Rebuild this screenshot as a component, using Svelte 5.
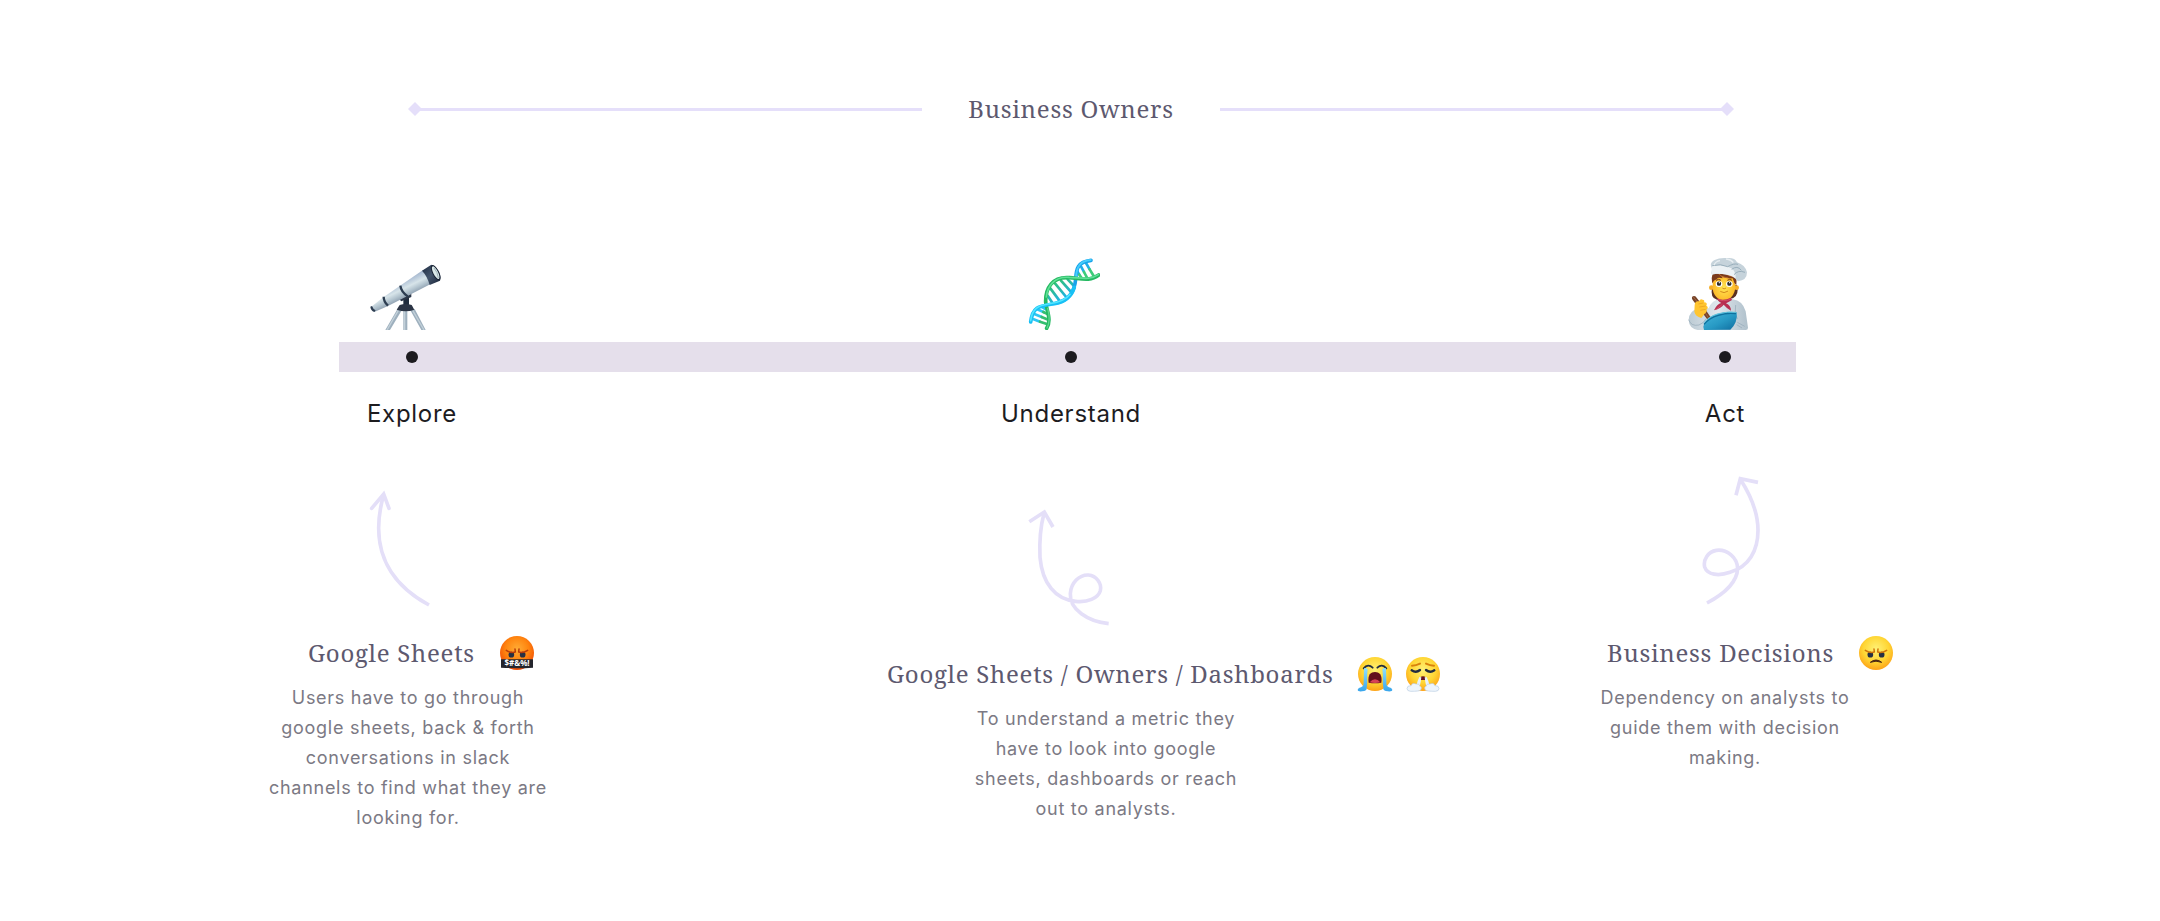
<script>
  const notes = [
    {
      id: 'explore',
      title: 'Google Sheets',
      faces: ['cursing'],
      text: 'Users have to go through google sheets, back & forth conversations in slack channels to find what they are looking for.',
      arrow: {
        width: 67,
        viewBox: '321 0 201 450',
        cap: 'round',
        head: 'M335 115 L371 72 L387 115',
        shaft: 'M507 405 C370 331 332 216 370 78'
      }
    },
    {
      id: 'understand',
      title: 'Google Sheets / Owners / Dashboards',
      faces: ['crying', 'steaming'],
      text: 'To understand a metric they have to look into google sheets, dashboards or reach out to analysts.',
      arrow: {
        width: 90,
        viewBox: '135 3 270 450',
        cap: 'butt',
        head: 'M148 95 L193 66 L219 111',
        shaft: 'M386 401 C324 395 268 358 271 311 C273 278 298 254 325 255 C350 257 366 281 361 302 C354 325 322 338 287 334 C226 329 187 280 180 202 C178 160 181 112 192 70'
      }
    },
    {
      id: 'act',
      title: 'Business Decisions',
      faces: ['angry'],
      text: 'Dependency on analysts to guide them with decision making.',
      arrow: {
        width: 63,
        viewBox: '180 30 189 450',
        cap: 'butt',
        head: 'M288 106 L301 56 L354 67',
        shaft: 'M201 429 C254 401 291 366 293 326 C292 291 260 267 229 271 C204 275 189 299 194 321 C202 345 236 349 270 337 C326 321 354 273 354 211 C354 158 332 106 302 59'
      }
    }
  ];
</script>

{#snippet face(kind)}
  <svg class="face" viewBox="0 0 108 108" aria-hidden="true">
    <defs>
      <radialGradient id="g-{kind}" cx="50%" cy="38%" r="62%">
        {#if kind === 'cursing'}
          <stop offset="0" stop-color="#ffac35" /><stop offset=".55" stop-color="#ff850f" /><stop offset="1" stop-color="#f04a05" />
        {:else}
          <stop offset="0" stop-color="#fff176" /><stop offset=".6" stop-color="#ffd634" /><stop offset="1" stop-color="#fda318" />
        {/if}
      </radialGradient>
      <linearGradient id="tear-{kind}" x1="0" y1="0" x2="0" y2="1">
        <stop offset="0" stop-color="#8fe0ff" /><stop offset="1" stop-color="#38a5ec" />
      </linearGradient>
    </defs>
    <circle cx="54" cy="54" r="51" fill="url(#g-{kind})" />
    {#if kind === 'cursing' || kind === 'angry'}
      <circle cx="37" cy="59" r="8.5" fill="#263044" />
      <circle cx="71" cy="59" r="8.5" fill="#263044" />
      <g fill="none" stroke={kind === 'cursing' ? '#b83b0a' : '#cf7408'} stroke-width="4.5" stroke-linecap="round">
        <path d="M22 46 Q34 54 46 52 M48 42 L49 51" />
        <path d="M86 46 Q74 54 62 52 M60 42 L59 51" />
      </g>
      {#if kind === 'angry'}
        <path d="M37 82 Q54 68 71 82 Q54 75 37 82Z" fill="#482413" stroke="#482413" stroke-width="3" stroke-linejoin="round" />
      {:else}
        <path d="M6 73 H102 V98 Q54 101 6 98Z" fill="#24252d" />
        <text x="54" y="93" text-anchor="middle">$#&%!</text>
      {/if}
    {:else if kind === 'crying'}
      <path d="M20 37 Q33 22 47 35 M61 35 Q75 22 88 37" fill="none" stroke="#222c40" stroke-width="5.5" stroke-linecap="round" />
      <path d="M35 80 C31 56 42 48 54 48 S77 56 73 80 Q54 84 35 80Z" fill="#64101d" />
      <path d="M38 79 Q54 60 70 79 Q54 83 38 79Z" fill="#d64256" />
      <path d="M21 37 Q28 34 32 40 C28 60 33 78 29 95 Q31 105 15 106 Q2 107 2 101 Q4 95 12 94 Q21 92 20 76Z" fill="url(#tear-{kind})" />
      <path d="M87 37 Q80 34 76 40 C80 60 75 78 79 95 Q77 105 93 106 Q106 107 106 101 Q104 95 96 94 Q87 92 88 76Z" fill="url(#tear-{kind})" />
    {:else}
      <path d="M21 29 Q33 29 45 23 M63 23 Q75 29 87 29" fill="none" stroke="#d9820c" stroke-width="6" stroke-linecap="round" />
      <path d="M20 43 Q33 52 45 42 M63 42 Q75 52 88 43" fill="none" stroke="#222c40" stroke-width="7" stroke-linecap="round" />
      <path d="M42 72 Q44 61 54 61 T66 72Z" fill="#64101d" />
      <path d="M43 63 Q38 73 35 86 L45 88 Q48 75 49 64Z M65 63 Q70 73 73 86 L63 88 Q60 75 59 64Z" fill="#e8f2fc" />
      <path d="M6 98 Q6 88 18 89 Q22 79 33 84 Q44 82 45 91 Q52 94 47 102 Q44 106 17 106 Q6 105 6 98Z" fill="#eef5fc" stroke="#b9cde2" stroke-width="2" />
      <path d="M102 98 Q102 88 90 89 Q86 79 75 84 Q64 82 63 91 Q56 94 61 102 Q64 106 91 106 Q102 105 102 98Z" fill="#eef5fc" stroke="#b9cde2" stroke-width="2" />
    {/if}
  </svg>
{/snippet}

<main>
  <header>
    <svg class="diamond" viewBox="0 0 12 12" aria-hidden="true"><path d="M6 0 L12 6 L6 12 L0 6Z" /></svg>
    <span class="rule"></span>
    <h1>Business Owners</h1>
    <span class="rule"></span>
    <svg class="diamond" viewBox="0 0 12 12" aria-hidden="true"><path d="M6 0 L12 6 L6 12 L0 6Z" /></svg>
  </header>

  <section class="stages">
    <svg class="icon" viewBox="150 54 216 216" aria-hidden="true">
      <defs>
        <linearGradient id="tube" gradientUnits="userSpaceOnUse" x1="240" y1="118" x2="268" y2="174">
          <stop offset="0" stop-color="#8fa2b8" /><stop offset=".22" stop-color="#b1c2d6" /><stop offset=".5" stop-color="#d7e4e9" /><stop offset=".72" stop-color="#b3c4cf" /><stop offset="1" stop-color="#8293a5" />
        </linearGradient>
        <linearGradient id="navy" x1="0" y1="0" x2="1" y2="1">
          <stop offset="0" stop-color="#1d2b40" /><stop offset=".5" stop-color="#44556c" /><stop offset="1" stop-color="#172235" />
        </linearGradient>
      </defs>
      <path d="M235 208 L199 270 H213 L247 213Z M253 210 H265 V270 H253Z M274 211 L307 270 H320 L287 207Z" fill="#9eb0be" />
      <path d="M238 211 L204 270 M257 212 V270 M281 211 L315 270" stroke="#c2d0d9" stroke-width="4" />
      <path d="M253 170 H270 V198 H253Z" fill="#202c3d" />
      <path d="M241 178 L277 161 L277 171 L247 184Z" fill="#2c3749" />
      <path d="M242 195 Q260 189 278 195 L286 209 Q260 219 233 209Z" fill="#2b3444" />
      <path d="M155 202 L193 172 L241 139 L311 91 L335 132 L264 169 L207 198 L166 216Z" fill="url(#tube)" />
      <path d="M309 92 L337 74 Q353 80 361 97 Q367 111 363 122 L332 135 Q325 109 309 92Z" fill="url(#navy)" />
      <ellipse cx="350" cy="98" rx="10" ry="25" transform="rotate(-27 350 98)" fill="#192334" />
      <ellipse cx="350" cy="98" rx="7" ry="21" transform="rotate(-27 350 98)" fill="#dbe9e9" />
      <path d="M345 84 Q356 96 358 114" stroke="#9db2b9" stroke-width="3" fill="none" />
      <path d="M244 137 Q246 155 266 169 M194 170 Q194 185 207 197" fill="none" stroke="#2d3d51" stroke-width="7" />
      <path d="M154 200 Q155 211 166 216 L170 211 Q162 207 159 198Z" fill="#2d3d51" />
    </svg>
    <svg class="icon" viewBox="144 54 216 216" aria-hidden="true">
      <defs>
        <linearGradient id="rung" gradientUnits="userSpaceOnUse" x1="215" y1="125" x2="250" y2="180">
          <stop offset="0" stop-color="#2fc46f" /><stop offset=".5" stop-color="#2bb9a6" /><stop offset="1" stop-color="#1cb2f0" />
        </linearGradient>
      </defs>
      <g fill="none" stroke-linecap="round">
        <g stroke-width="8">
          <path d="M318 69 L329 88 M303 79 L312 96 M292 94 L298 104" stroke="#22aee8" />
          <path d="M329 88 L341 108 M312 96 L321 113 M298 104 L305 114" stroke="#3dcc79" />
          <path d="M263 118 L282 138 M243 122 L276 159 M225 130 L261 174 M211 145 L240 184 M203 167 L217 188" stroke="url(#rung)" />
          <path d="M184 200 L196 207 M172 208 L190 216 M163 222 L185 231 M157 236 L180 245" stroke="#2cc6f3" />
          <path d="M190 216 L206 224 M185 231 L206 240 M180 245 L203 253" stroke="#35bf70" />
        </g>
        <path d="M333 61 C292 66 289 86 287 117 C284 153 266 180 235 187" stroke="#18a2ea" stroke-width="11" />
        <path d="M332 60 C300 63 290 80 288 111" stroke="#45cdfb" stroke-width="6" />
        <path d="M356 105 C329 126 302 115 268 113 C217 109 196 144 197 186 C199 210 216 239 200 265" stroke="#25b962" stroke-width="11" />
        <path d="M355 104 C328 123 300 112 267 112 C222 109 202 139 199 171" stroke="#5fe096" stroke-width="5" />
        <path d="M203 205 Q213 241 201 264" stroke="#5ed78f" stroke-width="4" />
        <path d="M283 142 C272 176 248 187 223 191 C180 198 158 197 152 246" stroke="#18c0f5" stroke-width="11" />
        <path d="M270 163 C255 183 230 189 205 192 C175 196 156 207 152 242" stroke="#52e6ff" stroke-width="5" />
      </g>
    </svg>
    <svg class="icon" viewBox="126 54 216 216" aria-hidden="true">
      <defs>
        <linearGradient id="bowl" x1="0" y1="0" x2="1" y2="1">
          <stop offset="0" stop-color="#45b8dd" /><stop offset=".55" stop-color="#2799c4" /><stop offset="1" stop-color="#0f6c9e" />
        </linearGradient>
        <linearGradient id="coat"><stop offset="0" stop-color="#bccbd4" /><stop offset=".5" stop-color="#e0e7ed" /><stop offset="1" stop-color="#afc0cb" /></linearGradient>
        <radialGradient id="skin"><stop offset="0" stop-color="#ffe452" /><stop offset="1" stop-color="#fdb928" /></radialGradient>
      </defs>
      <path d="M146 240 Q147 211 175 206 L206 205 Q216 180 240 178 H278 Q308 182 317 214 L324 263 Q324 270 317 270 H173 Q147 265 146 240Z" fill="url(#coat)" />
      <path d="M146 239 Q153 260 177 255 Q192 249 198 236 M287 195 Q282 219 292 237 M292 247 L314 259 M290 254 L306 264" fill="none" stroke="#93a8b7" stroke-width="2" />
      <path d="M216 143 Q210 174 231 179 L279 175 Q298 166 291 135Z" fill="#5b3020" />
      <circle cx="214" cy="143" r="7" fill="#f5ad27" /><circle cx="290" cy="143" r="7" fill="#f5ad27" />
      <path d="M218 104 H286 V145 Q282 170 263 181 Q251 187 239 180 Q219 166 218 145Z" fill="url(#skin)" />
      <path d="M216 124 Q212 98 230 99 L277 99 Q292 104 289 136 Q282 130 278 115 Q260 117 244 108 L248 115 Q233 110 231 117 Q222 119 216 130Z" fill="#7b3b1c" />
      <path d="M235 101 Q244 113 265 114 M258 102 Q266 108 276 109" fill="none" stroke="#bd692f" stroke-width="3" />
      <path d="M214 99 Q217 87 215 83 Q207 69 224 60 Q239 53 266 54 Q286 54 291 67 Q316 75 321 97 Q321 121 294 124 Q284 113 275 107 Q242 98 216 104Z" fill="#c6d3db" />
      <path d="M216 79 Q247 71 274 85 Q288 94 287 115 Q261 99 215 102Z" fill="#edf2f5" />
      <path d="M217 77 Q242 70 263 80 Q282 69 294 73 M275 88 Q292 75 304 91 M282 104 Q294 89 315 97" fill="none" stroke="#98aebb" stroke-width="3" />
      <path d="M222 76 Q226 64 240 62 M258 57 Q274 59 280 68" fill="none" stroke="#e8eef2" stroke-width="4" />
      <ellipse cx="237" cy="132" rx="10" ry="9" fill="#fff" /><ellipse cx="268" cy="132" rx="10" ry="9" fill="#fff" />
      <circle cx="237" cy="131" r="6.5" fill="#2c2928" /><circle cx="268" cy="131" r="6.5" fill="#2c2928" />
      <circle cx="238" cy="128" r="2" fill="#fff" /><circle cx="269" cy="128" r="2" fill="#fff" />
      <path d="M228 121 Q236 115 243 121 M262 121 Q269 115 276 121" fill="none" stroke="#7b3b1c" stroke-width="3" />
      <path d="M242 155 Q252 162 263 154 M248 145 Q252 149 257 145" fill="none" stroke="#cb7c16" stroke-width="2.5" stroke-linecap="round" />
      <path d="M231 175 Q249 184 273 173 L276 180 Q264 187 258 190 Q273 197 273 212 Q260 205 251 194 Q245 204 222 211 Q231 191 244 189 Q232 183 231 175Z" fill="#b72f51" />
      <path d="M235 178 Q249 186 271 178 M247 193 L229 208" stroke="#dc5c72" stroke-width="2" fill="none" />
      <path d="M159 169 Q166 166 171 175 L187 195 L216 238 L205 242 L174 201 L158 180 Q153 172 159 169Z" fill="#764329" />
      <path d="M160 171 L183 199 L207 236" stroke="#9e6543" stroke-width="3" fill="none" />
      <path d="M164 195 Q165 182 177 184 Q181 175 188 179 Q195 180 192 187 Q204 188 199 197 Q207 202 200 208 Q202 217 194 221 L184 234 Q166 229 163 215Z" fill="#ffc530" />
      <path d="M175 192 L190 189 M178 201 L197 198 M181 211 L197 208" stroke="#e99c1e" stroke-width="2" fill="none" />
      <path d="M190 260 Q194 234 231 222 Q263 212 290 217 Q294 248 271 269 L192 270Z" fill="url(#bowl)" />
      <path d="M192 253 Q207 234 235 226 Q264 217 288 221" fill="none" stroke="#0f719e" stroke-width="4" />
      <path d="M192 248 Q207 229 235 221 Q264 214 288 217" fill="none" stroke="#63c3dc" stroke-width="3" />
    </svg>

    <span class="band"></span>
    <span class="dot first"></span>
    <span class="dot second"></span>
    <span class="dot third"></span>

    <h2>Explore</h2>
    <h2>Understand</h2>
    <h2>Act</h2>
  </section>

  <section class="notes">
    {#each notes as note (note.id)}
      <article class={note.id}>
        <svg class="arrow" width={note.arrow.width} height="150" viewBox={note.arrow.viewBox} stroke-linecap={note.arrow.cap} aria-hidden="true">
          <path d={note.arrow.head} />
          <path d={note.arrow.shaft} stroke-linecap="butt" />
        </svg>
        <div class="heading">
          <h3>{note.title}</h3>
          <div class="faces">
            {#each note.faces as kind}{@render face(kind)}{/each}
          </div>
        </div>
        <p>{note.text}</p>
      </article>
    {/each}
  </section>
</main>

<style>
  :global(body) {
    margin: 0;
    background: #fff;
  }

  main {
    padding: 91px 0 64px;
    font-family: Inter, sans-serif;
    letter-spacing: 0;
  }

  h1,
  h2,
  h3,
  p {
    margin: 0;
    font-weight: 400;
  }

  h1,
  h2,
  h3 {
    font-size: 24px;
    line-height: 36px;
    letter-spacing: 0.03em;
  }

  h1,
  h3 {
    font-family: 'Noto Serif', 'Droid Serif', 'DejaVu Serif Condensed', 'Liberation Serif', serif;
    color: #5d596f;
    white-space: nowrap;
  }

  header {
    display: flex;
    align-items: center;
    padding: 0 426px 0 408px;
  }

  h1 {
    padding: 0 46px;
  }

  .rule {
    flex: 1;
    height: 3px;
    background: #e5dffa;
  }

  .diamond {
    width: 14px;
    height: 14px;
    margin: 0 -4px;
    fill: #e5dffa;
  }

  .diamond:first-child {
    margin-left: 0;
  }

  .diamond:last-child {
    margin-right: 0;
  }

  .stages {
    display: grid;
    grid-template-columns: 662fr 656fr 652fr;
    grid-template-rows: 84px 30px 60px;
    padding: 131px 109px 0 81px;
    justify-items: center;
    align-items: center;
  }

  .icon {
    align-self: start;
    width: 72px;
    height: 72px;
    margin-right: 14px;
  }

  .band {
    grid-area: 2 / 1 / 3 / 4;
    justify-self: stretch;
    height: 30px;
    margin: 0 255px 0 258px;
    background: #e5dfeb;
  }

  .dot {
    grid-row: 2;
    width: 12px;
    height: 12px;
    border-radius: 50%;
    background: #1c1b1f;
  }

  .first {
    grid-column: 1;
  }

  .second {
    grid-column: 2;
  }

  .third {
    grid-column: 3;
  }

  h2 {
    align-self: end;
    color: #1d1c1f;
  }

  .notes {
    display: grid;
    grid-template-columns: 620fr 708fr 565fr;
    padding: 38px 0 0 267px;
  }

  .arrow {
    display: block;
    fill: none;
    stroke: #e4dff8;
    stroke-width: 11;
  }

  .heading {
    display: flex;
    align-items: center;
    gap: 24px;
    margin: 15px 0 12px;
  }

  .faces {
    display: flex;
    gap: 12px;
  }

  .face {
    width: 36px;
    height: 36px;
  }

  .face text {
    font: 700 24px 'Noto Sans', sans-serif;
    letter-spacing: 0;
    fill: #fff;
  }

  p {
    font-size: 18px;
    line-height: 30px;
    letter-spacing: 0.04em;
    color: #7b7984;
    text-align: center;
  }

  .explore .arrow {
    margin-left: 100px;
  }

  .explore .heading {
    margin-left: 41px;
  }

  .explore p {
    width: 282px;
  }

  .understand {
    padding-top: 21px;
  }

  .understand .arrow {
    margin-left: 138px;
  }

  .understand p {
    width: 270px;
    margin-left: 84px;
  }

  .act .arrow {
    margin-left: 105px;
  }

  .act .heading {
    margin-left: 12px;
  }

  .act p {
    width: 260px;
  }
</style>
